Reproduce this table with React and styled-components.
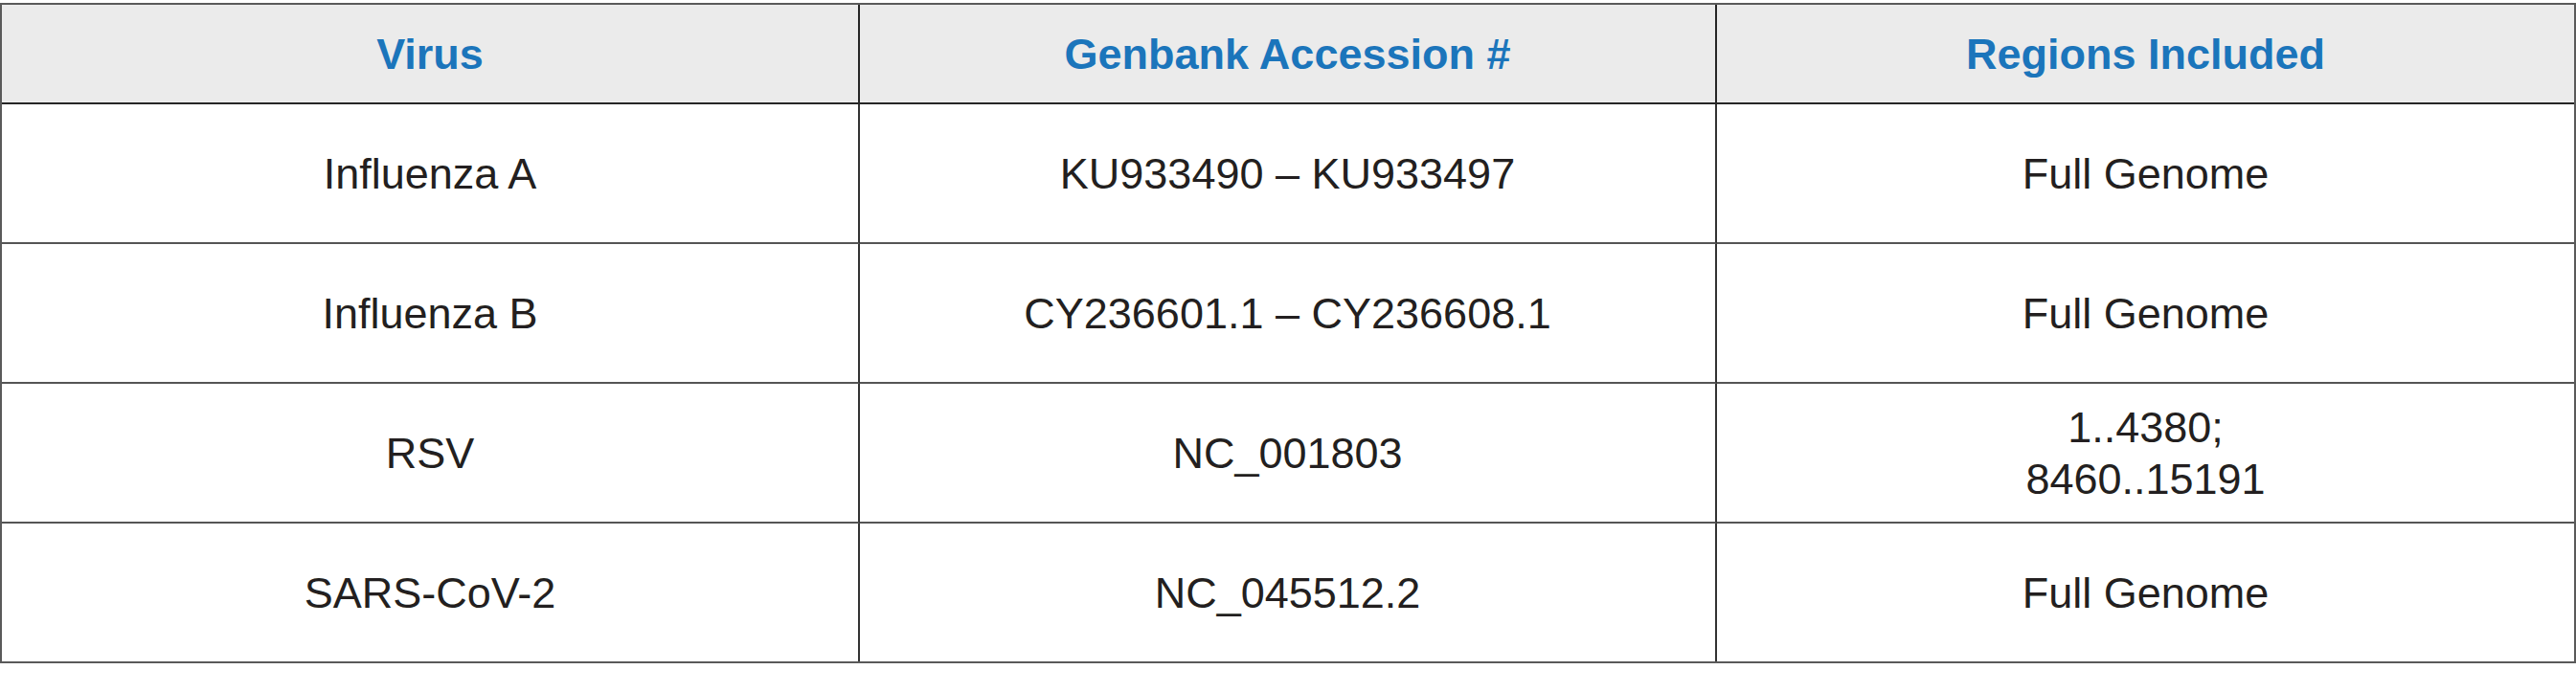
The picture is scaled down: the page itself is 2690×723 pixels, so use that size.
import React from 'react';
import styled, { createGlobalStyle } from 'styled-components';

const GlobalStyle = createGlobalStyle`
  html, body {
    margin: 0;
    padding: 0;
    background: #fff;
  }
`;

const Page = styled.div`
  padding-top: 3px;
`;

const Grid = styled.div`
  display: grid;
  grid-template-columns: 896px 895px 895px;
  grid-auto-rows: auto;
  width: 2690px;
  box-sizing: border-box;
  border: 2px solid #5a5a5a;
  font-family: "Liberation Sans", Arial, sans-serif;
  font-size: 45px;
  line-height: 54px;
`;

const Cell = styled.div`
  display: flex;
  align-items: center;
  justify-content: center;
  flex-direction: column;
  text-align: center;
  box-sizing: border-box;
  height: ${(p) => (p.$head ? 104 : p.$last ? 144 : 146)}px;
  padding-top: ${(p) => (p.$head ? 2 : 1)}px;
  border-right: ${(p) => (p.$end ? 'none' : `2px solid ${p.$head ? '#262626' : '#333'}`)};
  border-bottom: ${(p) => (p.$last ? 'none' : `2px solid ${p.$head ? '#262626' : '#555'}`)};
  background: ${(p) => (p.$head ? '#ebebeb' : '#fff')};
  color: ${(p) => (p.$head ? '#1b75bb' : '#231f20')};
  font-weight: ${(p) => (p.$head ? 700 : 400)};
`;

const headers = ['Virus', 'Genbank Accession #', 'Regions Included'];

const rows = [
  ['Influenza A', 'KU933490 \u2013 KU933497', ['Full Genome']],
  ['Influenza B', 'CY236601.1 \u2013 CY236608.1', ['Full Genome']],
  ['RSV', 'NC_001803', ['1..4380;', '8460..15191']],
  ['SARS-CoV-2', 'NC_045512.2', ['Full Genome']],
];

export default function App() {
  return (
    <Page>
      <GlobalStyle />
      <Grid>
        {headers.map((h, i) => (
          <Cell key={h} $head $end={i === headers.length - 1}>
            {h}
          </Cell>
        ))}
        {rows.map(([virus, accession, regions], r) => {
          const last = r === rows.length - 1;
          return (
            <React.Fragment key={virus}>
              <Cell $last={last}>{virus}</Cell>
              <Cell $last={last}>{accession}</Cell>
              <Cell $last={last} $end>
                {regions.map((line) => (
                  <span key={line}>{line}</span>
                ))}
              </Cell>
            </React.Fragment>
          );
        })}
      </Grid>
    </Page>
  );
}
